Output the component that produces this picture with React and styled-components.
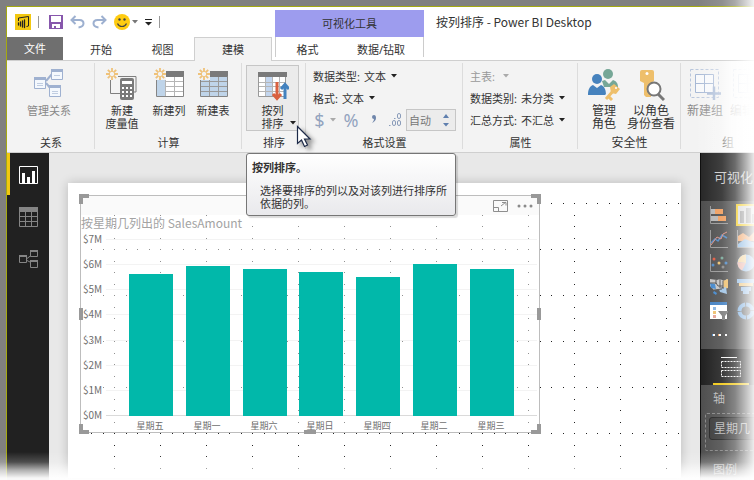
import React from "react";
import styled, { createGlobalStyle, css } from "styled-components";

const Global = createGlobalStyle`
  *, *::before, *::after { box-sizing: border-box; }
  body { margin: 0; background: #808080; }
  body, button, input, select {
    font-family: "Noto Sans", "Noto Sans CJK SC", sans-serif;
    font-size: 11px;
    line-height: 13px;
    color: #333;
  }
  button, select, input { margin: 0; padding: 0; border: 0; background: none; }
  svg { display: block; flex: none; }
`;

const Frame = styled.div`
  position: relative;
  min-height: 100vh;
  padding: 6px 0 0 6px;
  background: #808080;
  display: flex;
  overflow: hidden;
`;

const Fade = styled.div`
  position: absolute;
  inset: 0;
  pointer-events: none;
  background:
    linear-gradient(to top, #fff 0, rgba(255,255,255,.96) 6px, rgba(255,255,255,.64) 14px, rgba(255,255,255,.2) 22px, rgba(255,255,255,0) 32px),
    linear-gradient(to left, rgba(255,255,255,.9) 0, rgba(255,255,255,.65) 8px, rgba(255,255,255,.32) 19px, rgba(255,255,255,.12) 32px, rgba(255,255,255,0) 56px);
`;

const Window = styled.div`
  flex: 1;
  min-width: 0;
  display: flex;
  flex-direction: column;
  border-left: 1px solid #a5a912;
  border-top: 1px solid #a5a912;
  background: #fff;
  overflow: hidden;
`;

/* ---------- title bar and tabs ---------- */

const Header = styled.header`
  display: flex;
  height: 54px;
  box-shadow: inset 0 -1px #cfcfcf;
`;

const HeaderColumn = styled.div`
  display: flex;
  flex-direction: column;
  margin-right: 3px;
`;

const QuickBar = styled.div`
  display: flex;
  align-items: center;
  height: 30px;
  padding-left: 8px;
  gap: 7px;
`;

const QuickButton = styled.button`
  display: flex;
  align-items: center;
  gap: 2px;
`;

const QuickSeparator = styled.span`
  width: 1px;
  height: 12px;
  margin-right: 3px;
  background: #999;
`;

const Tabs = styled.nav`
  display: flex;
  height: 24px;
`;

const Tab = styled.button`
  width: ${(p) => p.$width}px;
  flex: ${(p) => (p.$grow ? "1" : "none")};
  height: 24px;
  ${(p) => p.$kind === "file" && css`
    height: 23px;
    margin-right: 8px;
    background: #6f6f6f;
    color: #fff;
  `}
  ${(p) => p.$kind === "active" && css`
    background: #f3f3f3;
    border: 1px solid #cfcfcf;
    border-bottom: 0;
  `}
`;

const ContextGroup = styled.div`
  width: 149px;
  padding-top: 3px;
`;

const ContextTitle = styled.div`
  height: 27px;
  background: #9d9cee;
  display: flex;
  align-items: center;
  justify-content: center;
`;

const ContextTabs = styled(Tabs)`
  height: 20px;
  border: solid #ccc;
  border-width: 0 1px;
`;

const WindowTitle = styled.h1`
  margin: 0 0 0 12px;
  font-family: "Noto Sans CJK SC", sans-serif;
  font-size: 12px;
  line-height: 30px;
  font-weight: 400;
  white-space: nowrap;
`;

/* ---------- ribbon ---------- */

const Ribbon = styled.section`
  position: relative;
  display: flex;
  height: 92px;
  background: #f3f3f3;
  border-bottom: 1px solid #cfcfcf;
  &::after {
    content: "";
    position: absolute;
    top: 0;
    right: 0;
    bottom: 0;
    width: 60px;
    pointer-events: none;
    background: linear-gradient(to left, #fff 0, rgba(255,255,255,.75) 22px, rgba(255,255,255,.3) 34px, rgba(255,255,255,0));
  }
`;

const Group = styled.div`
  flex: none;
  position: relative;
  width: ${(p) => p.$width}px;
  padding-top: 4px;
  display: flex;
  flex-direction: column;
  &::after {
    content: "";
    position: absolute;
    right: 0;
    top: 2px;
    bottom: 3px;
    width: 1px;
    background: #dcdcdc;
  }
`;

const GroupItems = styled.div`
  display: flex;
  height: 66px;
  padding-left: ${(p) => p.$pad}px;
`;

const GroupRows = styled.div`
  height: 66px;
  padding-left: 7px;
`;

const GroupName = styled.div`
  margin-top: 3px;
  line-height: 18px;
  text-align: center;
  font-size: ${(p) => p.$size || 11}px;
`;

const BigButton = styled.button`
  position: relative;
  flex: none;
  width: ${(p) => p.$width}px;
  display: flex;
  flex-direction: column;
  align-items: center;
  border: 1px solid ${(p) => (p.$active ? "#c6c6c6" : "transparent")};
  background: ${(p) => (p.$active ? "#ebebeb" : "none")};
  color: ${(p) => (p.$muted ? "#888" : "#333")};
  font-size: ${(p) => p.$size || 11}px;
  white-space: nowrap;
`;

const IconArea = styled.span`
  height: 38px;
  padding-top: 2px;
`;

const ButtonCaret = styled.span`
  position: absolute;
  right: 2px;
  bottom: 5px;
`;

const Row = styled.div`
  display: flex;
  align-items: center;
  height: 22px;
  white-space: nowrap;
`;

const Field = styled.label`
  display: flex;
  align-items: center;
  color: ${(p) => (p.$muted ? "#999" : "#333")};
`;

const FieldSelect = styled.select`
  appearance: none;
  margin: 0 5px 0 4px;
  outline: 0;
  &:disabled { width: 4px; margin-right: 0; }
`;

const FormatButton = styled.button`
  display: flex;
  align-items: center;
  justify-content: center;
  gap: 5px;
  width: ${(p) => p.$width}px;
  color: #93a4bf;
  font-size: 18px;
  line-height: 20px;
`;

const Spinner = styled.div`
  display: flex;
  align-items: center;
  width: 50px;
  height: 22px;
  border: 1px solid #c6c6c6;
  background: #ececec;
`;

const SpinnerInput = styled.input`
  width: 36px;
  padding-left: 2px;
  color: #777;
`;

const SpinnerArrows = styled.div`
  display: flex;
  flex-direction: column;
  gap: 5px;
`;

/* ---------- body ---------- */

const Body = styled.div`
  flex: 1;
  display: flex;
  min-height: 0;
  background: #e8e8e8;
`;

const Rail = styled.nav`
  width: 42px;
  flex: none;
  background: #212121;
`;

const RailButton = styled.button`
  display: flex;
  align-items: center;
  width: 100%;
  height: 42px;
  padding: 2px 0 0 ${(p) => (p.$active ? "9px" : "12px")};
  border-left: ${(p) => (p.$active ? "3px solid #f2c811" : "0")};
`;

const Canvas = styled.main`
  flex: 1;
  min-width: 0;
  padding: 30px 19px 6px;
`;

const Page = styled.div`
  position: relative;
  height: 100%;
  padding: 12px 0 0 12px;
  background: #fff;
  box-shadow: 0 0 10px rgba(0, 0, 0, 0.2);
`;

const DotGrid = styled.svg`
  position: absolute;
  inset: 0;
  width: 100%;
  height: 100%;
`;

const Visual = styled.article`
  position: relative;
  width: 460px;
  max-width: 100%;
  border: 1px solid #bdbdbd;
  background: rgba(255, 255, 255, 0.5);
`;

const VisualBar = styled.div`
  display: flex;
  align-items: center;
  justify-content: flex-end;
  gap: 8px;
  height: 19px;
  padding-right: 5px;
  background: #fafafa;
`;

const IconButton = styled.button`
  display: flex;
`;

const VisualTitle = styled.h2`
  margin: 0;
  font-family: "Noto Sans CJK SC", sans-serif;
  font-size: 12px;
  line-height: 16px;
  font-weight: 400;
  color: #a3a3a3;
  white-space: nowrap;
`;

const Chart = styled.svg`
  width: 100%;
  height: auto;
`;

const AxisText = styled.text`
  font-family: "Noto Sans CJK SC", sans-serif;
  font-size: ${(p) => p.$size}px;
  fill: #6f6f6f;
`;

const corners = {
  nw: "top: -2px; left: -2px; border-width: 4px 0 0 4px;",
  ne: "top: -2px; right: -2px; border-width: 4px 4px 0 0;",
  sw: "bottom: -2px; left: -2px; border-width: 0 0 4px 4px;",
  se: "bottom: -2px; right: -2px; border-width: 0 4px 4px 0;",
  w: "top: calc(50% - 6px); left: -2px; width: 4px; height: 12px; border-width: 0 0 0 4px;",
  e: "top: calc(50% - 6px); right: -2px; width: 4px; height: 12px; border-width: 0 4px 0 0;",
  s: "bottom: -2px; left: calc(50% - 6px); width: 12px; height: 4px; border-width: 0 0 4px 0;",
};

const Handle = styled.span`
  position: absolute;
  width: 10px;
  height: 10px;
  border: 0 solid #999;
  ${(p) => corners[p.$at]}
`;

const Pane = styled.aside`
  width: 54px;
  flex: none;
  overflow: hidden;
  border-left: 1px solid #0c0c0c;
  background: #4c4c4c;
  color: #b8b8b8;
  white-space: nowrap;
`;

const PaneTitle = styled.h2`
  margin: 0;
  height: 48px;
  padding-left: 13px;
  background: #252525;
  color: #ccc;
  font-size: 13px;
  line-height: 48px;
  font-weight: 400;
`;

const Gallery = styled.div`
  display: grid;
  grid-template-columns: 20px 20px;
  grid-auto-rows: 22px;
  column-gap: 7px;
  row-gap: 2px;
  padding: 3px 0 0 8px;
  height: 148px;
`;

const VisualType = styled.button`
  display: flex;
  align-items: center;
  justify-content: center;
  border: ${(p) => (p.$selected ? "2px solid #f2c811" : "0")};
  background: ${(p) => (p.$selected ? "#d4d4d4" : "none")};
`;

const PaneTab = styled.button`
  display: block;
  width: 100px;
  height: 36px;
  padding-left: 12px;
  background: #1e1e1e;
`;

const PaneTabMark = styled.span`
  display: block;
  width: 36px;
  height: 36px;
  padding: 8px;
  border-bottom: 2px solid #f2c811;
`;

const WellName = styled.div`
  padding-left: 12px;
  font-size: 12px;
  line-height: 28px;
`;

const Well = styled.div`
  width: 120px;
  height: 38px;
  margin: 0 0 5px 4px;
  padding: 3px;
  border: 1px dashed #858585;
  border-radius: 2px;
`;

const WellItem = styled.div`
  height: 23px;
  padding-left: 4px;
  border: 1px solid #222;
  border-radius: 3px;
  background: #3a3a3a;
  font-size: 12px;
  line-height: 21px;
`;

/* ---------- overlays ---------- */

const Tooltip = styled.div`
  position: absolute;
  z-index: 2;
  left: 4px;
  top: 92px;
  width: 210px;
  height: 63px;
  padding: 7px 6px 0 5px;
  border: 1px solid #767676;
  border-radius: 3px;
  background: linear-gradient(#fff, #e9e9ec);
  box-shadow: 2px 2px 1px rgba(0, 0, 0, 0.14);
`;

const TooltipTitle = styled.strong`
  display: block;
  margin-bottom: 10px;
  font-weight: 700;
`;

const TooltipText = styled.p`
  margin: 0;
  padding-left: 8px;
`;

const Pointer = styled.svg`
  position: absolute;
  z-index: 3;
  left: 54px;
  top: 64px;
  filter: drop-shadow(4px 3px 2px rgba(0, 0, 0, 0.4));
`;

/* ---------- drawings ---------- */

const Caret = ({ color = "#222" }) => (
  <svg width="6" height="4" viewBox="0 0 6 4"><path d="M0 0h6L3 3.5z" fill={color} /></svg>
);

const Logo = () => (
  <svg width="16" height="16" viewBox="0 0 16 16">
    <path fill="#f2c811" d="M0 0h16v16H0z" />
    <path d="M3.500 7V4L13.500 2.500V12l-2 .5" fill="none" stroke="#222" strokeLinejoin="round" />
    <path d="M3.500 9v2M5.500 8v4M7.500 7v6M9.500 6v7.500" stroke="#222" strokeWidth="1.300" strokeLinecap="round" />
  </svg>
);

const SaveIcon = () => (
  <svg width="14" height="14" viewBox="0 0 14 14">
    <path fill="#8757ac" d="M0 0h14v14H0z" />
    <path fill="#fff" d="M2 1h10v6H2zM3 9h8v4H3z" />
    <path fill="#8757ac" d="M5 11h2v3H5z" />
  </svg>
);

const UndoIcon = ({ flip }) => (
  <svg width="15" height="14" viewBox="0 0 15 14">
    <g transform={flip ? "matrix(-1 0 0 1 15 0)" : undefined} fill="none" stroke="#9db0d0" strokeWidth="2">
      <path d="M5.500 1L1.500 5l4 4" />
      <path d="M2 5h7.500c2.500 0 4 1.500 4 3.500S12 12 8.500 12.500" />
    </g>
  </svg>
);

const Smile = () => (
  <svg width="16" height="16" viewBox="0 0 16 16">
    <circle cx="8" cy="8" r="8" fill="#fc1" />
    <circle cx="5.500" cy="5.500" r="1.200" fill="#444" />
    <circle cx="10.500" cy="5.500" r="1.200" fill="#444" />
    <path d="M3.500 9.500c1.800 4 7.200 4 9 0" fill="none" stroke="#444" strokeWidth="1.200" />
  </svg>
);

const Spark = () => (
  <g stroke="#efc27a" strokeWidth="1.800">
    <path d="M6 0v4M6 8v4M0 6h4M8 6h4M1.800 1.800L4.500 4.500M7.500 7.500l2.700 2.700M10.200 1.800L7.500 4.500M4.500 7.500L1.800 10.200" />
  </g>
);

const RelationIcon = () => (
  <svg width="30" height="30" viewBox="0 0 30 30">
    <g stroke="#9fb1d0" fill="#f4f8fd">
      <path d="M12 13l6-7M12 15l5 6" strokeWidth="2" />
      <path d="M17.500 2.500h11v9h-11zM.5 10.500h11v10H.5zM15.500 18.500h11v10h-11z" />
      <path d="M17 2.500h12M0 10.500h12M15 18.500h12" strokeWidth="3" />
      <path d="M20 7.500h6M3 15.500h6M3 17.500h6M18 23.500h6M18 25.500h6" opacity=".6" />
    </g>
  </svg>
);

const MeasureIcon = () => (
  <svg width="32" height="32" viewBox="0 0 32 32">
    <path d="M4.500 12v13.500H14M12 8.500h18V24h-4" fill="none" stroke="#7f7f7f" />
    <rect x="14" y="10" width="14" height="22" rx="2" fill="#7a7a7a" />
    <path fill="#fff" d="M16 13h10v3H16zM16 19h2v2h-2zM20 19h2v2h-2zM24 19h2v2h-2zM16 23h2v2h-2zM20 23h2v2h-2zM24 23h2v2h-2zM16 27h2v2h-2zM20 27h2v2h-2zM24 27h2v2h-2z" />
    <Spark />
  </svg>
);

const TableIcon = ({ full }) => (
  <svg width="30" height="30" viewBox="0 0 30 30">
    <path fill="#fff" d="M2 3h28v26H2z" />
    <path fill="#bfd4e9" d={full ? "M2 8h28v20H2z" : "M2 8h9v20H2z"} />
    <path fill="#7a7a7a" d="M2 3h28v6H2z" />
    <path d="M11.500 9v19M20.500 9v19" stroke={full ? "#999" : "#b5b5b5"} />
    <path d={full ? "M2 13.500h28M2 18.500h28M2 23.500h28" : "M11 13.500h19M11 18.500h19M11 23.500h19"} stroke={full ? "#999" : "#b5b5b5"} />
    <path d="M2.500 8v20.500h27V8" fill="none" stroke="#858585" />
    <path d="M0 0h12v12H0z" fill="#f3f3f3" />
    <Spark />
  </svg>
);

const SortIcon = () => (
  <svg width="32" height="33" viewBox="0 -3 32 33">
    <path fill="#fff" d="M1 2h28v23H1z" />
    <path fill="#c3d6ef" d="M8 6h7v19H8z" />
    <path d="M1 11.500h28M1 15.500h28M1 20.500h28M8.500 6v19M15.500 6v19M22.500 6v19" stroke="#b5b5b5" />
    <path d="M1.500 6v19.500h27V6" fill="none" stroke="#999" />
    <path fill="#7a7a7a" d="M1 1h29v5H1z" />
    <path d="M20 11v16M16 23l4 4.500 4-4.500" fill="none" stroke="#d9603f" strokeWidth="3" />
    <path d="M28 28V14M24 18l4-4.500 4 4.500" fill="none" stroke="#4382bf" strokeWidth="3" />
  </svg>
);

const RolesIcon = () => (
  <svg width="34" height="34" viewBox="0 0 34 34">
    <circle cx="21" cy="6" r="5" fill="#76a797" />
    <path fill="#76a797" d="M15 13l3-1 4 4 4-4c3 1 5 3 5 7H17z" />
    <circle cx="10" cy="11" r="5" fill="#4682bd" />
    <path fill="#4682bd" d="M1 27c0-6 2-9 5-10l4 3 4-3c3 1 5 4 5 10z" />
    <path d="M20 30l8-9" stroke="#f3f3f3" strokeWidth="7" />
    <path d="M19 31l8-9M22 29l3 3" stroke="#eebf6b" strokeWidth="3" />
    <path d="M23 19l4-3 6 5-4 5-5-1z" fill="#eebf6b" />
    <circle cx="29" cy="20" r="1" fill="#fff" />
  </svg>
);

const ViewRoleIcon = () => (
  <svg width="28" height="34" viewBox="0 0 28 34">
    <path fill="#eebf6b" d="M3 4q0-2 2-2h10q2 0 2 2v9l-3 2v14H9l-2-2V15l-4-2z" />
    <circle cx="10" cy="5.500" r="1.500" fill="#fff" />
    <path d="M20 25l7 7" stroke="#777" strokeWidth="3" />
    <circle cx="17" cy="21" r="6.500" fill="#fff" stroke="#777" strokeWidth="2" />
  </svg>
);

const NewGroupIcon = ({ edit }) => (
  <svg width="32" height="32" viewBox="0 0 32 32">
    <path d="M1.500 1.500h28v28h-28z" fill="none" stroke="#b9c6dc" strokeDasharray="3 2" />
    <path d="M6.500 6.500h18v18h-18zM15.500 6v19M6 15.500h19" fill="#f8f9fb" stroke="#a5b7d4" />
    <path d={edit ? "M17 31l13-13" : "M18 25.500h14M25 18.500v14"} stroke="#a5b7d4" strokeWidth="2.500" />
  </svg>
);

const ReportIcon = () => (
  <svg width="19" height="18" viewBox="0 0 19 18">
    <path d="M.5.5h18v17H.5z" fill="none" stroke="#fff" />
    <path d="M4.500 7v11M9.500 11v7M14.500 5v13" stroke="#fff" strokeWidth="3" />
  </svg>
);

const DataIcon = () => (
  <svg width="19" height="20" viewBox="0 0 19 20">
    <path fill="#858585" d="M0 0h19v5H0z" />
    <path d="M.5 1v18.500h18V1M0 9.500h19M0 14.500h19M6.500 5v15M12.500 5v15" fill="none" stroke="#858585" />
  </svg>
);

const ModelIcon = () => (
  <svg width="19" height="18" viewBox="0 0 19 18">
    <path d="M11.500 1.500h7v5h-7zM.5 6.500h7v6h-7zM11.500 11.500h7v6h-7zM8 8.500l4-3M8 10.500l4 2" fill="none" stroke="#858585" />
    <path d="M11 1h8M0 6h8M11 11h8" stroke="#858585" strokeWidth="2" />
  </svg>
);

const FocusIcon = () => (
  <svg width="15" height="12" viewBox="0 0 15 12">
    <path d="M.5.500h14v11H.5zM.5 7.500h5v4M8 6l5-4M9 2.500h4v3" fill="none" stroke="#8e8e8e" />
  </svg>
);

const MoreIcon = () => (
  <svg width="18" height="4" viewBox="0 0 18 4" fill="#8a8a8a">
    <circle cx="3" cy="2" r="1.500" /><circle cx="9" cy="2" r="1.500" /><circle cx="15" cy="2" r="1.500" />
  </svg>
);

const FieldsIcon = () => (
  <svg width="20" height="20" viewBox="0 0 20 20" fill="none" stroke="#f5f5f5">
    <path d="M0 .5h16" />
    <path d="M.5 4.500h19v6H.5zM.5 13.500h19v6H.5z" strokeDasharray="2 1" />
  </svg>
);

const Axes = () => <path d="M.5 0v17.500H18" fill="none" stroke="#969696" />;

const galleryDrawings = [
  ["堆积条形图", <><Axes /><path fill="#b5b5b5" d="M1 3h4v5H1zM1 10h7v5H1z" /><path fill="#ef9b59" d="M5 3h8v5H5zM8 10h8v5H8z" /></>],
  ["簇状柱形图", <path key="c" fill="#8c8c8c" d="M3 5h4v12H3zM9 2h5v15H9zM15 8h3v9h-3z" />],
  ["折线图", <><Axes /><path d="M1 13l4-4 3 2 4-6 5 3" fill="none" stroke="#4b87c5" strokeWidth="1.500" /><path d="M1 15l6-8 4 2 2-5 4-2" fill="none" stroke="#dd8e80" /></>],
  ["分区图", <><Axes /><path fill="#ef9b59" d="M1 6l5-3 6 4 6-6v10H1z" /><path fill="#80b1df" d="M1 14l7-5 10 4v4H1z" /></>],
  ["散点图", <><Axes /><circle cx="4" cy="5" r="1.500" fill="#e0563d" /><circle cx="12" cy="4" r="1.500" fill="#76a797" /><circle cx="9" cy="9" r="1.500" fill="#eebf6b" /><circle cx="3" cy="11" r="1.500" fill="#4b87c5" /><circle cx="16" cy="9" r="1.500" fill="#4b87c5" /><circle cx="13" cy="13" r="1.500" fill="#888" /></>],
  ["饼图", <><circle cx="9" cy="9" r="8.500" fill="#88b4e1" /><path fill="#f2cf91" d="M9 9V.5A8.500 8.500 0 0 0 .8 8z" /><path fill="#eab1a5" d="M9 9L.6 8A8.500 8.500 0 0 0 5 16.500z" /></>],
  ["着色地图", <><path fill="#c4c4c4" d="M0 1l7 1 3-1 4 2 3-2v9l-5-1-3 3H4L0 8z" /><path fill="#eebf6b" d="M13 3l5-2v9l-4 1z" /><path fill="#3f86cd" d="M0 5l5 1 1 5-5-1zM4 13l3 2-1 2-3-2z" /><path fill="#9cc2e5" d="M9 11l7-2 1 7-7-2z" /><path d="M0 5h6l2 3h5M6 2v4M10 1v9M4 12l8-1M13 3v8" fill="none" stroke="#4c4c4c" /></>],
  ["漏斗图", <><path fill="#88b4e1" d="M0 1h18v4H0zM4 9h10v4H4z" /><path fill="#eebf6b" d="M2 5h14v3H2z" /><path fill="#88b4e1" d="M6 13h6v3H6z" /></>],
  ["切片器", <><path fill="#fff" d="M0 1h17v16H0z" /><path fill="#3f7ec1" d="M0 0h17v3H0z" /><path fill="#88b4e1" d="M3 5h3v3H3z" /><path fill="#eebf6b" d="M3 9h3v3H3z" /><path fill="#e5a196" d="M3 13h3v3H3z" /><path fill="#777" d="M8 9h11l-4 5v4h-3v-4z" /></>],
  ["圆环图", <circle key="d" cx="9" cy="9" r="6.500" fill="none" stroke="#73a8dd" strokeWidth="4" strokeDasharray="9 1" />],
  ["更多", <><path fill="#fff" d="M3 8h2v2H3zM9 8h2v2H9zM15 8h2v2h-2z" /><path fill="#4b87c5" d="M2 8h1v2H2z" /><path fill="#ef9b59" d="M8 8h1v2H8z" /></>],
];

/* ---------- chart ---------- */

const days = [
  ["五", 142], ["一", 150], ["六", 147], ["日", 144], ["四", 139], ["二", 152], ["三", 147],
].map(([d, height], i) => ({ name: "星期" + d, height, x: 48 + Math.round(i * 56.8) }));

const SalesChart = () => (
  <Chart viewBox="0 0 458 201" role="img" aria-label="SalesAmount">
    {[0, 1, 2, 3, 4, 5, 6, 7].map((n) => {
      const y = Math.round(184 - n * 25.15);
      return (
        <g key={n}>
          <path d={`M25 ${y + 0.5}H456`} stroke={n ? "#f3f3f3" : "#dadada"} />
          <AxisText x="2" y={y + 4} $size={10}>{`$${n}M`}</AxisText>
        </g>
      );
    })}
    {days.map((d) => (
      <g key={d.name}>
        <rect x={d.x} y={185 - d.height} width="44" height={d.height} fill="#01b8aa" />
        <AxisText x={d.x + 21} y="198" $size={9} textAnchor="middle">{d.name}</AxisText>
      </g>
    ))}
  </Chart>
);

const PropertyField = ({ label, value, disabled }) => (
  <Row>
    <Field $muted={disabled}>
      {label}:
      <FieldSelect disabled={disabled}><option>{value}</option></FieldSelect>
      <Caret color={disabled ? "#aaa" : "#222"} />
    </Field>
  </Row>
);

export default function App() {
  return (
    <Frame>
      <Global />
      <Window>
        <Header>
          <HeaderColumn>
            <QuickBar>
              <Logo />
              <QuickSeparator />
              <QuickButton aria-label="保存"><SaveIcon /></QuickButton>
              <QuickButton aria-label="撤消"><UndoIcon /></QuickButton>
              <QuickButton aria-label="恢复"><UndoIcon flip /></QuickButton>
              <QuickButton aria-label="反馈"><Smile /><Caret color="#777" /></QuickButton>
              <QuickButton aria-label="自定义">
                <svg width="7" height="7" viewBox="0 0 7 7"><path d="M0 0h7v1H0zM0 3h7L3.500 6.500z" fill="#222" /></svg>
              </QuickButton>
              <QuickSeparator />
            </QuickBar>
            <Tabs>
              <Tab $width={56} $kind="file">文件</Tab>
              <Tab $width={60}>开始</Tab>
              <Tab $width={63}>视图</Tab>
              <Tab $width={78} $kind="active">建模</Tab>
            </Tabs>
          </HeaderColumn>
          <ContextGroup>
            <ContextTitle>可视化工具</ContextTitle>
            <ContextTabs>
              <Tab $width={63}>格式</Tab>
              <Tab $grow>数据/钻取</Tab>
            </ContextTabs>
          </ContextGroup>
          <WindowTitle>按列排序 - Power BI Desktop</WindowTitle>
        </Header>

        <Ribbon>
          <Group $width={88}>
            <GroupItems $pad={11}>
              <BigButton $width={62} $muted><IconArea><RelationIcon /></IconArea>管理关系</BigButton>
            </GroupItems>
            <GroupName>关系</GroupName>
          </Group>
          <Group $width={147}>
            <GroupItems $pad={3}>
              <BigButton $width={48}><IconArea><MeasureIcon /></IconArea>新建<br />度量值</BigButton>
              <BigButton $width={46}><IconArea><TableIcon /></IconArea>新建列</BigButton>
              <BigButton $width={42}><IconArea><TableIcon full /></IconArea>新建表</BigButton>
            </GroupItems>
            <GroupName>计算</GroupName>
          </Group>
          <Group $width={64}>
            <GroupItems $pad={4}>
              <BigButton $width={53} $active>
                <IconArea><SortIcon /></IconArea>按列<br />排序
                <ButtonCaret><Caret /></ButtonCaret>
              </BigButton>
            </GroupItems>
            <GroupName>排序</GroupName>
            <Tooltip role="tooltip">
              <TooltipTitle>按列排序。</TooltipTitle>
              <TooltipText>选择要排序的列以及对该列进行排序所依据的列。</TooltipText>
            </Tooltip>
            <Pointer width="16" height="24" viewBox="0 0 16 24">
              <path d="M1.500 1.500v17l4-3.500 3 6.500 3-1.500-3-6h5.500z" fill="#fff" stroke="#1d2a48" strokeWidth="1.200" />
            </Pointer>
          </Group>
          <Group $width={157}>
            <GroupRows>
              <PropertyField label="数据类型" value="文本" />
              <PropertyField label="格式" value="文本" />
              <Row>
                <FormatButton $width={24} aria-label="货币">$<Caret color="#aaa" /></FormatButton>
                <FormatButton $width={28} aria-label="百分比">%</FormatButton>
                <FormatButton $width={18} aria-label="千位分隔符">
                  <svg width="6" height="10" viewBox="0 0 6 10"><path d="M1 2q0-2 2-2t2 3q0 3-4 5 2-2 2-4-2 0-2-2" fill="#6f86ab" /></svg>
                </FormatButton>
                <FormatButton $width={23} aria-label="小数位数">
                  <svg width="14" height="14" viewBox="0 0 14 14" fill="none" stroke="#8a9cba">
                    <rect x="9.500" y=".5" width="3" height="5" rx="1.500" />
                    <rect x="4.500" y="7.500" width="3" height="5" rx="1.500" />
                    <rect x="9.500" y="7.500" width="3" height="5" rx="1.500" />
                    <path d="M1 12.500h1.500M6 5.500h1.500" />
                  </svg>
                </FormatButton>
                <Spinner>
                  <SpinnerInput aria-label="小数位数" defaultValue="自动" />
                  <SpinnerArrows>
                    <IconButton aria-label="增加"><svg width="6" height="4" viewBox="0 0 6 4"><path d="M0 4h6L3 0z" fill="#5f7fae" /></svg></IconButton>
                    <IconButton aria-label="减少"><Caret color="#5f7fae" /></IconButton>
                  </SpinnerArrows>
                </Spinner>
              </Row>
            </GroupRows>
            <GroupName>格式设置</GroupName>
          </Group>
          <Group $width={115}>
            <GroupRows>
              <PropertyField label="主表" value="" disabled />
              <PropertyField label="数据类别" value="未分类" />
              <PropertyField label="汇总方式" value="不汇总" />
            </GroupRows>
            <GroupName>属性</GroupName>
          </Group>
          <Group $width={103}>
            <GroupItems $pad={5}>
              <BigButton $width={42} $size={12}><IconArea><RolesIcon /></IconArea>管理<br />角色</BigButton>
              <BigButton $width={52} $size={12}><IconArea><ViewRoleIcon /></IconArea>以角色<br />身份查看</BigButton>
            </GroupItems>
            <GroupName $size={12}>安全性</GroupName>
          </Group>
          <Group $width={94}>
            <GroupItems $pad={2}>
              <BigButton $width={44} $size={12} $muted><IconArea><NewGroupIcon /></IconArea>新建组</BigButton>
              <BigButton $width={42} $size={12} $muted><IconArea><NewGroupIcon edit /></IconArea>编辑组</BigButton>
            </GroupItems>
            <GroupName $size={12}>组</GroupName>
          </Group>
        </Ribbon>

        <Body>
          <Rail>
            <RailButton $active aria-label="报表"><ReportIcon /></RailButton>
            <RailButton aria-label="数据"><DataIcon /></RailButton>
            <RailButton aria-label="关系"><ModelIcon /></RailButton>
          </Rail>
          <Canvas>
            <Page>
              <DotGrid aria-hidden="true">
                <defs>
                  <pattern id="dots" y="20" width="46" height="46" patternUnits="userSpaceOnUse">
                    <path fill="#222" d="M0 0h1v1H0zM12 0h1v1h-1zM23 0h1v1h-1zM35 0h1v1h-1zM0 12h1v1H0zM0 23h1v1H0zM0 35h1v1H0z" />
                  </pattern>
                </defs>
                <rect x="1" y="20" width="100%" height="100%" fill="url(#dots)" />
              </DotGrid>
              <Visual>
                <VisualBar>
                  <IconButton aria-label="焦点模式"><FocusIcon /></IconButton>
                  <IconButton aria-label="更多选项"><MoreIcon /></IconButton>
                </VisualBar>
                <VisualTitle>按星期几列出的 SalesAmount</VisualTitle>
                <SalesChart />
                {Object.keys(corners).map((c) => <Handle key={c} $at={c} />)}
              </Visual>
            </Page>
          </Canvas>
          <Pane>
            <PaneTitle>可视化</PaneTitle>
            <Gallery>
              {galleryDrawings.map(([name, art], i) => (
                <VisualType key={name} aria-label={name} $selected={i === 1}>
                  <svg width="18" height="18" viewBox="0 0 18 18">{art}</svg>
                </VisualType>
              ))}
            </Gallery>
            <PaneTab aria-label="字段"><PaneTabMark><FieldsIcon /></PaneTabMark></PaneTab>
            <WellName>轴</WellName>
            <Well><WellItem>星期几</WellItem></Well>
            <WellName>图例</WellName>
          </Pane>
        </Body>
      </Window>
      <Fade />
    </Frame>
  );
}
